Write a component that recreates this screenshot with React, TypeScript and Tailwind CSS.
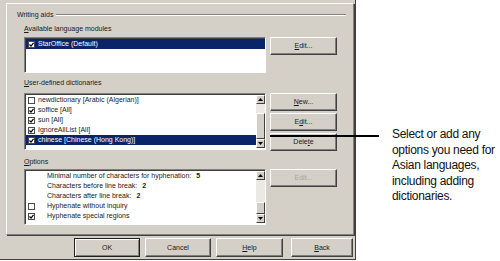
import React from "react";

const ui = "font-['Liberation_Sans',Arial,sans-serif] text-[7px] leading-[10px] text-[#1a1a1a]";

function Check({ checked }: { checked: boolean }) {
  return (
    <span className="flex h-[7px] w-[7px] shrink-0 items-center justify-center border border-[#4a4a4a] bg-white">
      {checked && (
        <svg width="5" height="5" viewBox="0 0 5 5">
          <path d="M0.5 2.5 L2 4 L4.5 0.8" stroke="#000" strokeWidth="1.2" fill="none" />
        </svg>
      )}
    </span>
  );
}

function Btn({ children, disabled = false }: { children: React.ReactNode; disabled?: boolean }) {
  return (
    <div
      className={
        disabled
          ? "flex h-[18px] w-[67px] items-center justify-center border border-t-white border-l-white border-r-[#404040] border-b-[#404040] bg-[#d4d0c8] text-[#a8a59d] shadow-[inset_-1px_-1px_0_#808080]"
          : "flex h-[18px] w-[67px] items-center justify-center border border-t-white border-l-white border-r-[#404040] border-b-[#404040] bg-[#d4d0c8] shadow-[inset_-1px_-1px_0_#808080]"
      }
    >
      {children}
    </div>
  );
}

function Arrow({ down = false }: { down?: boolean }) {
  return (
    <div className="flex h-[9px] w-[9px] items-center justify-center border border-t-white border-l-white border-r-[#404040] border-b-[#404040] bg-[#d4d0c8]">
      <svg width="5" height="3" viewBox="0 0 5 3">
        <path d={down ? "M0 0 H5 L2.5 3 Z" : "M0 3 H5 L2.5 0 Z"} fill="#000" />
      </svg>
    </div>
  );
}

function Thumb({ h }: { h: string }) {
  return (
    <div className={`${h} w-[9px] border border-t-white border-l-white border-r-[#404040] border-b-[#404040] bg-[#d4d0c8]`} />
  );
}

function Label({ children }: { children: React.ReactNode }) {
  return <div className="h-[10px] whitespace-nowrap">{children}</div>;
}

const listBox =
  "w-[242px] shrink-0 border border-t-[#808080] border-l-[#808080] border-r-white border-b-white bg-white shadow-[inset_1px_1px_0_#404040]";

export default function App() {
  const dicts = [
    { name: "newdictionary [Arabic (Algerian)]", on: false },
    { name: "soffice [All]", on: true },
    { name: "sun [All]", on: true },
    { name: "IgnoreAllList [All]", on: true },
    { name: "chinese [Chinese (Hong Kong)]", on: true, sel: true },
  ];

  return (
    <div className="relative flex h-[261px] w-[500px] overflow-hidden bg-white">
      {/* dialog */}
      <div className={`${ui} flex h-[260px] w-[356px] shrink-0 flex-col border-r border-b border-r-[#404040] border-b-[#404040] bg-[#d4d0c8]`}>
        <div className="mt-[3px] ml-[6px] flex h-[232px] w-[348px] flex-col border border-t-white border-l-white border-r-[#808080] border-b-[#808080] shadow-[1px_1px_0_#404040]">
          {/* group header */}
          <div className="mt-[6px] flex h-[10px] items-center gap-[3px] pr-[7px] pl-[10px]">
            <span>Writing aids</span>
            <div className="h-[2px] flex-1 border-t border-b border-t-[#808080] border-b-white" />
          </div>

          <div className="flex flex-col pl-[17px]">
            <div className="mt-[4px]">
              <Label>
                <u>A</u>vailable language modules
              </Label>
            </div>
            <div className="mt-[3px] flex gap-[4px]">
              <div className={`${listBox} h-[36px] py-px pl-px`}>
                <div className="flex h-[10px] items-center gap-[3px] bg-[#0a246a] pl-[2px] text-white">
                  <Check checked />
                  <span>StarOffice (Default)</span>
                </div>
              </div>
              <Btn>
                <span>
                  <u>E</u>dit...
                </span>
              </Btn>
            </div>

            <div className="mt-[5px]">
              <Label>
                <u>U</u>ser-defined dictionaries
              </Label>
            </div>
            <div className="mt-[5px] flex gap-[4px]">
              <div className={`${listBox} flex h-[57px] py-px pl-px`}>
                <div className="flex flex-1 flex-col">
                  {dicts.map((d) => (
                    <div
                      key={d.name}
                      className={
                        d.sel
                          ? "flex h-[10px] items-center gap-[3px] bg-[#0a246a] pl-[2px] text-white"
                          : "flex h-[10px] items-center gap-[3px] pl-[2px]"
                      }
                    >
                      <Check checked={d.on} />
                      <span className="whitespace-nowrap">{d.name}</span>
                    </div>
                  ))}
                </div>
                <div className="flex w-[9px] flex-col bg-[#ebe9e4]">
                  <Arrow />
                  <div className="flex flex-1 flex-col">
                    <div className="h-[9px]" />
                    <div className="flex-1 border border-t-white border-l-white border-r-[#404040] border-b-[#404040] bg-[#d4d0c8]" />
                  </div>
                  <Arrow down />
                </div>
              </div>
              <div className="flex flex-col gap-[2px]">
                <Btn>
                  <span>
                    <u>N</u>ew...
                  </span>
                </Btn>
                <Btn>
                  <span>
                    E<u>d</u>it...
                  </span>
                </Btn>
                <Btn>
                  <span>
                    Dele<u>t</u>e
                  </span>
                </Btn>
              </div>
            </div>

            <div className="mt-[6px]">
              <Label>
                <u>O</u>ptions
              </Label>
            </div>
            <div className="mt-[2px] flex gap-[4px]">
              <div className={`${listBox} flex h-[56px] py-px pl-px`}>
                <div className="flex flex-1 flex-col whitespace-nowrap">
                  <div className="flex h-[10px] items-center pl-[21px]">
                    Minimal number of characters for hyphenation:&nbsp; <b className="ml-[3px]">5</b>
                  </div>
                  <div className="flex h-[10px] items-center pl-[21px]">
                    Characters before line break:&nbsp; <b className="ml-[3px]">2</b>
                  </div>
                  <div className="flex h-[10px] items-center pl-[21px]">
                    Characters after line break:&nbsp; <b className="ml-[3px]">2</b>
                  </div>
                  <div className="flex h-[10px] items-center gap-[12px] pl-[2px]">
                    <Check checked={false} />
                    <span>Hyphenate without inquiry</span>
                  </div>
                  <div className="flex h-[10px] items-center gap-[12px] pl-[2px]">
                    <Check checked />
                    <span>Hyphenate special regions</span>
                  </div>
                </div>
                <div className="flex w-[9px] flex-col bg-[#ebe9e4]">
                  <Arrow />
                  <div className="flex flex-1 flex-col justify-end">
                    <Thumb h="h-[12px]" />
                  </div>
                  <Arrow down />
                </div>
              </div>
              <Btn disabled>
                <span>Edit...</span>
              </Btn>
            </div>
          </div>
        </div>

        {/* bottom buttons */}
        <div className="mt-[3px] flex gap-[5px] pl-[74px]">
          <div className="flex h-[19px] w-[66px] items-center justify-center border border-[#202020] bg-[#d4d0c8] shadow-[inset_1px_1px_0_#fff,inset_-1px_-1px_0_#808080]">
            OK
          </div>
          <div className="flex h-[19px] w-[66px] items-center justify-center border border-t-white border-l-white border-r-[#404040] border-b-[#404040] bg-[#d4d0c8] shadow-[inset_-1px_-1px_0_#808080]">
            Cancel
          </div>
          <div className="flex h-[19px] w-[67px] items-center justify-center border border-t-white border-l-white border-r-[#404040] border-b-[#404040] bg-[#d4d0c8] shadow-[inset_-1px_-1px_0_#808080]">
            <span>
              <u>H</u>elp
            </span>
          </div>
          <div className="ml-[3px] flex h-[19px] w-[62px] items-center justify-center border border-t-white border-l-white border-r-[#404040] border-b-[#404040] bg-[#d4d0c8] shadow-[inset_-1px_-1px_0_#808080]">
            <span>
              <u>B</u>ack
            </span>
          </div>
        </div>
      </div>

      {/* callout */}
      <div className="flex-1 whitespace-nowrap pt-[127px] pl-[36px] font-['Liberation_Sans',Arial,sans-serif] text-[12px] leading-[15.5px] tracking-[-0.3px] text-[#111]">
        Select or add any
        <br />
        options you need for
        <br />
        Asian languages,
        <br />
        including adding
        <br />
        dictionaries.
      </div>
      <div className="absolute top-[135px] left-[270px] h-[2px] w-[109px] bg-black" />
    </div>
  );
}
